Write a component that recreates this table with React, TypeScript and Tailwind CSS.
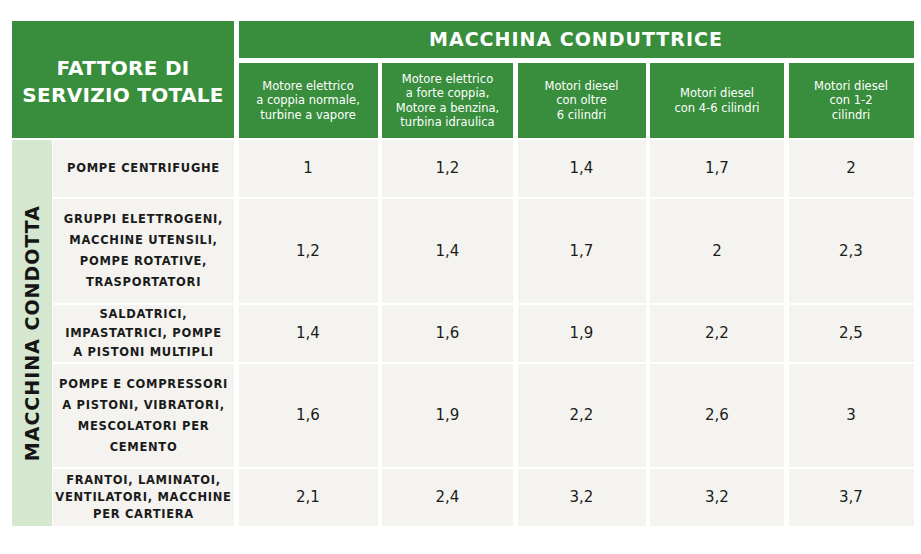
const drivers = [
  { col: 'col-start-2', lines: ['Motore elettrico', 'a coppia normale,', 'turbine a vapore'] },
  { col: 'col-start-3', lines: ['Motore elettrico', 'a forte coppia,', 'Motore a benzina,', 'turbina idraulica'] },
  { col: 'col-start-4', lines: ['Motori diesel', 'con oltre', '6 cilindri'] },
  { col: 'col-start-5', lines: ['Motori diesel', 'con 4-6 cilindri'] },
  { col: 'col-start-6', lines: ['Motori diesel', 'con 1-2', 'cilindri'] },
];

const valueCols = ['col-start-2', 'col-start-3', 'col-start-4', 'col-start-5', 'col-start-6'];

const rows = [
  {
    row: 'row-start-3',
    leading: 'leading-[21px]',
    label: ['POMPE CENTRIFUGHE'],
    values: ['1', '1,2', '1,4', '1,7', '2'],
  },
  {
    row: 'row-start-4',
    leading: 'leading-[21px]',
    label: ['GRUPPI ELETTROGENI,', 'MACCHINE UTENSILI,', 'POMPE ROTATIVE,', 'TRASPORTATORI'],
    values: ['1,2', '1,4', '1,7', '2', '2,3'],
  },
  {
    row: 'row-start-5',
    leading: 'leading-[19px]',
    label: ['SALDATRICI,', 'IMPASTATRICI, POMPE', 'A PISTONI MULTIPLI'],
    values: ['1,4', '1,6', '1,9', '2,2', '2,5'],
  },
  {
    row: 'row-start-6',
    leading: 'leading-[21px]',
    label: ['POMPE E COMPRESSORI', 'A PISTONI, VIBRATORI,', 'MESCOLATORI PER', 'CEMENTO'],
    values: ['1,6', '1,9', '2,2', '2,6', '3'],
  },
  {
    row: 'row-start-7',
    leading: 'leading-[17px]',
    label: ['FRANTOI, LAMINATOI,', 'VENTILATORI, MACCHINE', 'PER CARTIERA'],
    values: ['2,1', '2,4', '3,2', '3,2', '3,7'],
  },
];

export default function App() {
  return (
    <div className="w-[921px] h-[554px] bg-white pl-[12px] pt-[21px] font-['DejaVu_Sans',Verdana,sans-serif] text-[#1b1b1b]">
      <div className="grid grid-cols-[222px_139px_131px_128px_134px_125px] grid-rows-[40px_75px_57px_104px_57px_103px_57px] gap-x-[4.5px] gap-y-[2px]">
        {/* corner header */}
        <div className="col-start-1 row-start-1 row-span-2 bg-[#388e3c] flex items-center justify-center pt-[5px] text-white text-[20px] font-bold tracking-[0.3px] leading-[27px] text-center">
          FATTORE DI
          <br />
          SERVIZIO TOTALE
        </div>

        {/* driving machine */}
        <div className="col-start-2 col-span-5 row-start-1 h-[37px] self-start bg-[#388e3c] flex items-center justify-center text-white text-[19px] font-bold tracking-[1px]">
          MACCHINA CONDUTTRICE
        </div>
        {drivers.map((d, i) => (
          <div
            key={i}
            className={`${d.col} row-start-2 bg-[#388e3c] flex flex-col items-center justify-center text-white text-[11.5px] leading-[14.5px] text-center`}
          >
            {d.lines.map((l, j) => (
              <span key={j} className="whitespace-nowrap">
                {l}
              </span>
            ))}
          </div>
        ))}

        {/* driven machine */}
        <div className="col-start-1 row-start-3 row-span-5 w-[40px] justify-self-start bg-[#d5e8cf] flex items-center justify-center">
          <span className="[writing-mode:vertical-rl] rotate-180 text-[19px] font-bold tracking-[1px] whitespace-nowrap text-[#151515]">
            MACCHINA CONDOTTA
          </span>
        </div>

        {rows.map((r, i) => (
          <div key={i} className="contents">
            <div
              className={`col-start-1 ${r.row} ml-[41px] bg-[#f4f3ef] flex flex-col items-center justify-center text-[11.5px] font-bold tracking-[0.7px] ${r.leading} text-center`}
            >
              {r.label.map((l, j) => (
                <span key={j} className="whitespace-nowrap">
                  {l}
                </span>
              ))}
            </div>
            {r.values.map((v, j) => (
              <div key={j} className={`${valueCols[j]} ${r.row} bg-[#f4f3ef] flex items-center justify-center text-[15px]`}>
                {v}
              </div>
            ))}
          </div>
        ))}
      </div>
    </div>
  );
}
